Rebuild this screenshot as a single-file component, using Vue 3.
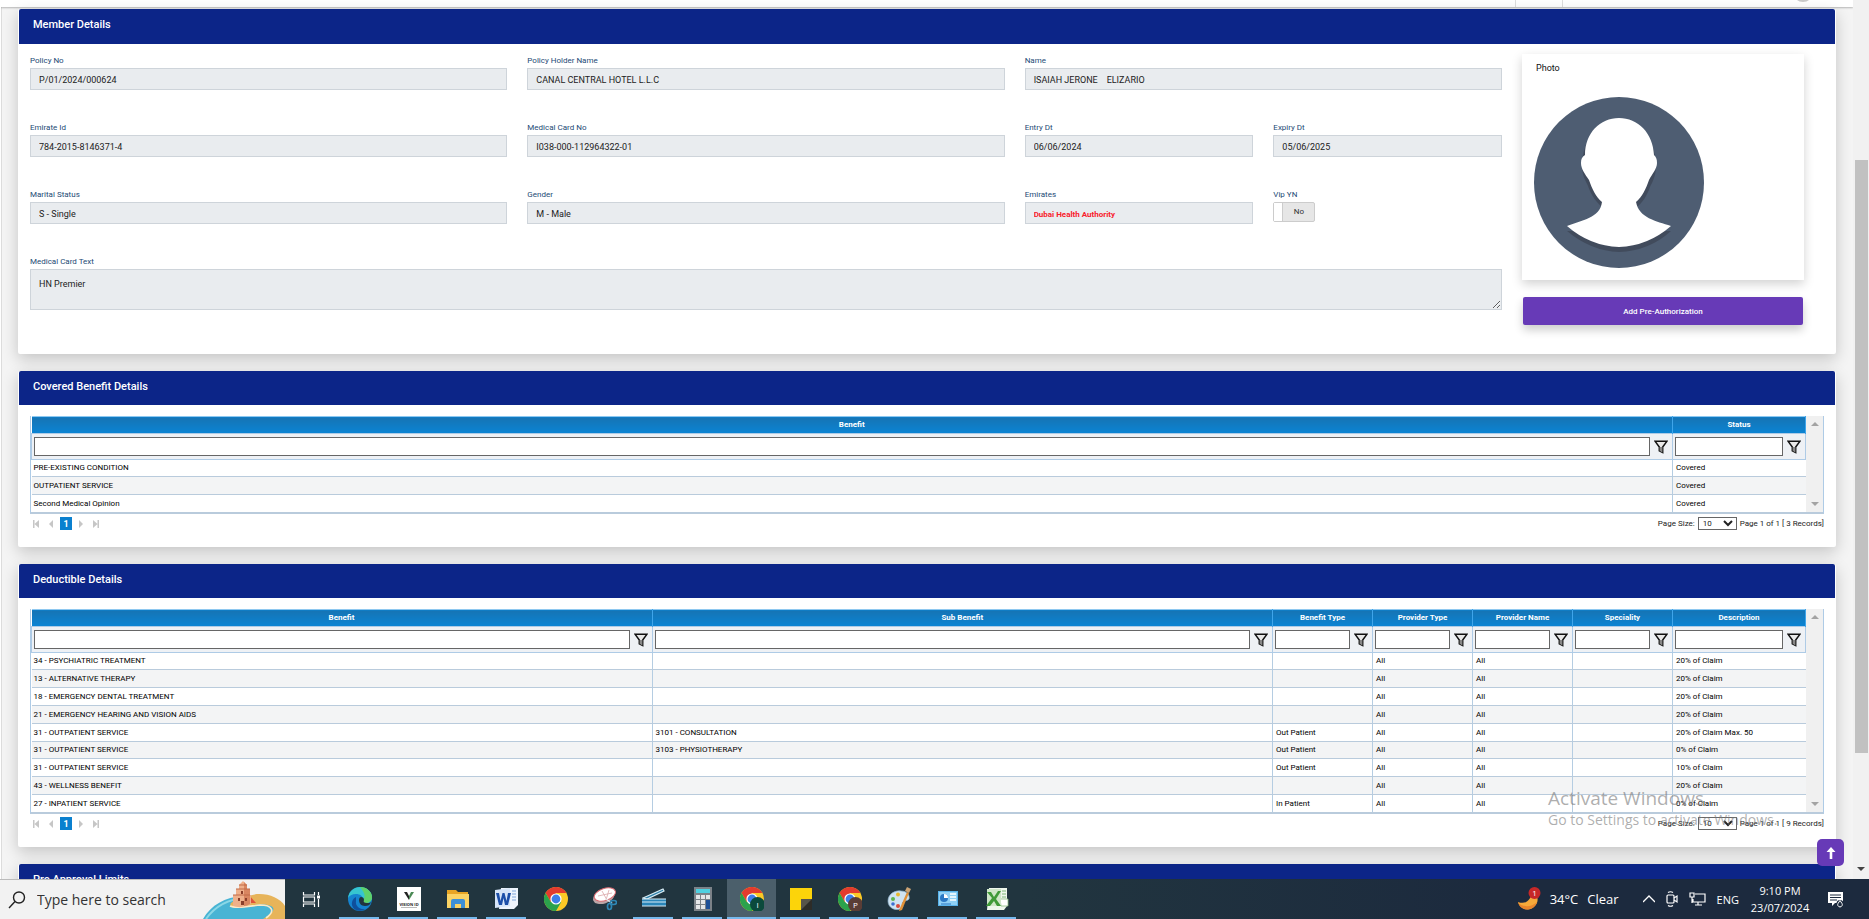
<script setup>
import { ref } from 'vue'

const fields = [
  { id: 'policy-no', label: 'Policy No', value: 'P/01/2024/000624', size: 'wide' },
  { id: 'policy-holder', label: 'Policy Holder Name', value: 'CANAL CENTRAL HOTEL L.L.C', size: 'wide' },
  { id: 'name', label: 'Name', value: 'ISAIAH JERONE    ELIZARIO', size: 'wide' },
  { id: 'emirate-id', label: 'Emirate Id', value: '784-2015-8146371-4', size: 'wide' },
  { id: 'card-no', label: 'Medical Card No', value: 'I038-000-112964322-01', size: 'wide' },
  { id: 'entry-dt', label: 'Entry Dt', value: '06/06/2024', size: 'half' },
  { id: 'expiry-dt', label: 'Expiry Dt', value: '05/06/2025', size: 'half' },
  { id: 'marital', label: 'Marital Status', value: 'S - Single', size: 'wide' },
  { id: 'gender', label: 'Gender', value: 'M - Male', size: 'wide' },
  { id: 'emirates', label: 'Emirates', value: 'Dubai Health Authority', size: 'half', alert: true },
]

const tables = [
  {
    id: 'covered',
    title: 'Covered Benefit Details',
    columns: [{ name: 'Benefit' }, { name: 'Status', width: 133 }],
    rows: [
      ['PRE-EXISTING CONDITION', 'Covered'],
      ['OUTPATIENT SERVICE', 'Covered'],
      ['Second Medical Opinion', 'Covered'],
    ],
    summary: 'Page 1 of 1 [ 3 Records]',
  },
  {
    id: 'deductible',
    title: 'Deductible Details',
    columns: [
      { name: 'Benefit' },
      { name: 'Sub Benefit' },
      { name: 'Benefit Type', width: 100 },
      { name: 'Provider Type', width: 100 },
      { name: 'Provider Name', width: 100 },
      { name: 'Speciality', width: 100 },
      { name: 'Description', width: 133 },
    ],
    rows: [
      ['34 - PSYCHIATRIC TREATMENT', '', '', 'All', 'All', '', '20% of Claim'],
      ['13 - ALTERNATIVE THERAPY', '', '', 'All', 'All', '', '20% of Claim'],
      ['18 - EMERGENCY DENTAL TREATMENT', '', '', 'All', 'All', '', '20% of Claim'],
      ['21 - EMERGENCY HEARING AND VISION AIDS', '', '', 'All', 'All', '', '20% of Claim'],
      ['31 - OUTPATIENT SERVICE', '3101 - CONSULTATION', 'Out Patient', 'All', 'All', '', '20% of Claim Max. 50'],
      ['31 - OUTPATIENT SERVICE', '3103 - PHYSIOTHERAPY', 'Out Patient', 'All', 'All', '', '0% of Claim'],
      ['31 - OUTPATIENT SERVICE', '', 'Out Patient', 'All', 'All', '', '10% of Claim'],
      ['43 - WELLNESS BENEFIT', '', '', 'All', 'All', '', '20% of Claim'],
      ['27 - INPATIENT SERVICE', '', 'In Patient', 'All', 'All', '', '0% of Claim'],
    ],
    summary: 'Page 1 of 1 [ 9 Records]',
  },
]

const vip = ref(false)
const cardText = ref('HN Premier')

const apps = [
  { id: 'taskview', label: 'Task View' },
  { id: 'edge', label: 'Edge', open: true },
  { id: 'vision', label: 'Vision', open: true },
  { id: 'folder', label: 'File Explorer', open: true },
  { id: 'word', label: 'Word', open: true },
  { id: 'chrome', label: 'Chrome' },
  { id: 'snip', label: 'Snipping Tool' },
  { id: 'scanner', label: 'Scanner', open: true },
  { id: 'calc', label: 'Calculator', open: true },
  { id: 'chrome', label: 'Chrome profile I', badge: 'I', badgeColor: '#0b4a3c', open: true, active: true },
  { id: 'notes', label: 'Sticky Notes', open: true },
  { id: 'chrome', label: 'Chrome profile P', badge: 'P', badgeColor: '#5a3d36', open: true },
  { id: 'paint', label: 'Paint', open: true },
  { id: 'panel', label: 'Control Panel', open: true },
  { id: 'excel', label: 'Excel', open: true },
]
</script>

<template>
  <div class="screen">
    <div class="viewport">
      <main class="page">
        <div class="navbar">
          <svg class="nav-avatar" viewBox="0 0 12 2" aria-hidden="true"><path d="M0 0h12q-2 2-6 2T0 0z" fill="#c9c9c9" /></svg>
        </div>

        <section class="panel member">
          <h2 class="panel-title">Member Details</h2>
          <div class="member-body">
            <div class="form">
              <div v-for="f in fields" :key="f.id" class="field" :class="f.size">
                <label :for="f.id">{{ f.label }}</label>
                <input :id="f.id" type="text" readonly :value="f.value" :class="{ alert: f.alert }" />
              </div>
              <div class="field half">
                <label for="vip">Vip YN</label>
                <button id="vip" type="button" class="toggle" @click="vip = !vip"><span class="knob"></span><span class="state">{{ vip ? 'Yes' : 'No' }}</span></button>
              </div>
              <div class="field full">
                <label for="card-text">Medical Card Text</label>
                <textarea id="card-text" v-model="cardText" readonly></textarea>
              </div>
            </div>
            <aside class="side">
              <div class="photo">
                <span class="photo-label">Photo</span>
                <svg viewBox="0 0 170 171" width="170" height="171" role="img" aria-label="Member photo">
                  <ellipse cx="85" cy="85.500" rx="85" ry="85.500" fill="#4e5d72" />
                  <g fill="#414b5c" transform="translate(0 5)">
                    <path d="M48 64C49 35 64 21 85 21s36 14 37 43c0 10-4 17-6 21-3 9-8 16-13 20H68c-5-4-11-12-14-21-2-5-6-10-6-20z" />
                    <path d="M33 129q24 20 52 21 30-1 52-21z" />
                  </g>
                  <path d="M33 129c15-6 33-8 35-24-6-5-10-13-13-22-4-6-8-11-8-17 0-4 1-6 4-8C51 36 66 21 85 21s34 15 35 37c2 2 3 4 3 8 0 6-5 11-8 17-3 9-7 17-13 22 3 16 20 19 35 24q-23 20-52 21-29-1-52-21z" fill="#fff" />
                </svg>
              </div>
              <button type="button" class="primary">Add Pre-Authorization</button>
            </aside>
          </div>
        </section>

        <section v-for="t in tables" :key="t.id" class="panel">
          <h2 class="panel-title">{{ t.title }}</h2>
          <div class="panel-body">
            <div class="grid-wrap">
              <table>
                <colgroup>
                  <col v-for="c in t.columns" :key="c.name" :style="c.width ? { width: c.width + 'px' } : {}" />
                </colgroup>
                <thead>
                  <tr class="heads">
                    <th v-for="c in t.columns" :key="c.name" scope="col">{{ c.name }}</th>
                  </tr>
                  <tr class="filters">
                    <td v-for="c in t.columns" :key="c.name">
                      <div class="filter">
                        <input type="text" :aria-label="'Filter ' + c.name" />
                        <button type="button" :aria-label="'Apply filter ' + c.name">
                          <svg viewBox="0 0 14 14" width="14" height="14"><path d="M1 1.200h12L8.700 7v5.600L5.300 10.800V7z" fill="#e9e9e9" stroke="#111" stroke-width="1.500" /><path d="M5.600 7v3.800l2.800 1.600V7z" fill="#888" /></svg>
                        </button>
                      </div>
                    </td>
                  </tr>
                </thead>
                <tbody>
                  <tr v-for="(r, i) in t.rows" :key="i">
                    <td v-for="(cell, j) in r" :key="j">{{ cell }}</td>
                  </tr>
                </tbody>
              </table>
              <div class="strip" aria-hidden="true"><i class="up"></i><i class="down"></i></div>
            </div>
            <div class="pager">
              <div class="pages">
                <button type="button" aria-label="First page"><svg viewBox="0 0 8 8" width="8" height="8"><path d="M1 0h1.500v8H1zM7 0v8L2.500 4z" /></svg></button>
                <button type="button" aria-label="Previous page"><svg viewBox="0 0 8 8" width="8" height="8"><path d="M6 0v8L2 4z" /></svg></button>
                <button type="button" class="current">1</button>
                <button type="button" aria-label="Next page"><svg viewBox="0 0 8 8" width="8" height="8"><path d="M2 0v8l4-4z" /></svg></button>
                <button type="button" aria-label="Last page"><svg viewBox="0 0 8 8" width="8" height="8"><path d="M5.500 0H7v8H5.500zM1 0v8l4.500-4z" /></svg></button>
              </div>
              <div class="size">
                <label :for="t.id + '-size'">Page Size:</label>
                <select :id="t.id + '-size'"><option>10</option><option>20</option></select>
                <span>{{ t.summary }}</span>
              </div>
            </div>
          </div>
        </section>

        <section class="panel">
          <h2 class="panel-title">Pre Approval Limits</h2>
          <div class="panel-body"></div>
        </section>
      </main>

      <div class="scrollbar" aria-hidden="true"><div class="thumb"></div><i class="down dark"></i></div>

      <div class="watermark"><p class="big">Activate Windows</p><p>Go to Settings to activate Windows.</p></div>
      <button type="button" class="to-top" aria-label="Back to top">
        <svg viewBox="0 0 12 12" width="12" height="12"><path d="M6 0l4.500 5H7.300v7H4.700V5H1.500z" fill="#fff" /></svg>
      </button>
    </div>

    <footer class="taskbar">
      <label class="search">
        <svg viewBox="0 0 18 18" width="18" height="18" aria-hidden="true"><circle cx="11" cy="6.500" r="5.500" fill="none" stroke="#222" stroke-width="1.400" /><path d="M7 10.500L1 17" stroke="#222" stroke-width="1.400" /></svg>
        <input type="text" placeholder="Type here to search" aria-label="Type here to search" />
        <svg class="castle" viewBox="0 0 82 38" width="82" height="38" aria-hidden="true">
          <path d="M0 38C8 24 22 16 40 15c22-2 38 6 42 16v7z" fill="#48b4d4" />
          <path d="M3 38C13 24 26 18 42 17" fill="none" stroke="#8ad7e6" stroke-width="2" />
          <path d="M46 15c12-5 30 0 36 10v13H60c8-5 14-10 8-13-8-3-18-1-27 1-8 2-16 0-13-4 4-4 12-5 18-7z" fill="#e7b45a" />
          <path d="M27 25c6 3 20 0 30-1 12 0 16 6 6 13" fill="none" stroke="#fbe9c8" stroke-width="1.600" />
          <path d="M46 14l7 8H44z" fill="#e0533a" />
          <path d="M30 25V14h3V8h3V4l4-4 4 4v4h3v6h1v9q-9 5-18 2z" fill="#efb08a" />
          <path d="M41 1l3 3v4h3v15q-3 2-6 2z" fill="#d98660" />
          <path d="M36 4h8M33 8h14M30 14h17" stroke="#c06a48" stroke-width="1" />
          <path d="M38 10h2v3h-2zM35 17h2v3h-2zM42 17h2v3h-2zM38 20h3v4h-3z" fill="#8a3f2a" />
        </svg>
      </label>

      <nav class="apps">
        <button v-for="(a, i) in apps" :key="i" type="button" :aria-label="a.label" :class="{ active: a.active, open: a.open }">
          <svg v-if="a.id === 'taskview'" viewBox="0 0 24 24" width="24" height="24" fill="none" stroke="#fff" stroke-width="1.200"><path d="M4.500 5v3h11V5M4.500 20v-3h11v3M4.500 10h11v5h-11zM19.500 5v3M19.500 12v8" /><path d="M18 8.500h3v3h-3z" fill="#fff" stroke="none" /></svg>
          <svg v-else-if="a.id === 'edge'" viewBox="0 0 24 24" width="24" height="24"><circle cx="12" cy="12" r="12" fill="#1583cf" /><path d="M0 11C1 4 6 0 12 0c7 0 12 5 12 10 0 4-3 6-6 6-3 0-4-1-3-3 0-4-3-6-7-6S1 9 0 11z" fill="#36c5d0" /><path d="M12 0c7 0 12 5 12 10 0 4-3 6-6 6-3 0-4-1-3-3 4-4 0-9-3-13z" fill="#5fd26a" /><path d="M11 13c0-2 1-3 2-3 2 0 3 1 3 3-1 2 0 3 3 3 2 0 3 0 4-1-1 3-3 4-6 4-4 0-6-3-6-6z" fill="#21353f" /><path d="M8 14c-1 5 4 9 9 8-2 2-6 2-9 1C3 21 2 13 8 10z" fill="#0f4f9c" /></svg>
          <svg v-else-if="a.id === 'vision'" viewBox="0 0 24 24" width="24" height="24"><path d="M0 0h24v24H0z" fill="#fff" /><path d="M7 5l5 8V9l-2-4z" fill="#222" /><path d="M17 5l-5 8V9l2-4z" fill="#4b8a55" /><text x="12" y="18.500" text-anchor="middle" class="logo-text">VISION ID</text><path d="M4 20.500h16" stroke="#bbb" /></svg>
          <svg v-else-if="a.id === 'folder'" viewBox="0 0 24 24" width="24" height="24"><path d="M1 3h9l2 2h10v5H1z" fill="#e8a524" /><path d="M1 7h22v14H1z" fill="#fbd364" /><path d="M5 21v-7q0-2 2-2h10q2 0 2 2v7h-4v-4H9v4z" fill="#3c8fd6" /></svg>
          <svg v-else-if="a.id === 'word'" viewBox="0 0 24 24" width="24" height="24"><path d="M6 1h17v17l-4 4H4z" fill="#eef4fc" /><path d="M17 4h4M17 7h4M17 10h4M17 13h4" stroke="#7fa5d8" /><path d="M0 3l15-2v18L0 21z" fill="#d7e5f8" /><path d="M1 6h3l1.500 8L7.500 6h2l2 8L13 6h3l-3 12h-3L8.500 11 7 18H4z" fill="#1d4fa8" /></svg>
          <svg v-else-if="a.id === 'chrome'" viewBox="0 0 24 24" width="24" height="24"><circle cx="12" cy="12" r="12" fill="#fbc926" /><path d="M1.600 6A12 12 0 0 1 22.400 6H12L6.800 15z" fill="#e33b2e" /><path d="M1.600 6A12 12 0 0 0 12 24l5.200-9H6.800z" fill="#2ba24c" /><circle cx="12" cy="12" r="5.600" fill="#fff" /><circle cx="12" cy="12" r="4.400" fill="#3f7ee8" /><template v-if="a.badge"><circle cx="17.500" cy="17.500" r="7.500" :fill="a.badgeColor" /><text x="17.500" y="20.500" text-anchor="middle" class="badge">{{ a.badge }}</text></template></svg>
          <svg v-else-if="a.id === 'snip'" viewBox="0 0 24 24" width="24" height="24"><ellipse cx="11" cy="10" rx="11" ry="6.500" fill="#bba5a7" transform="rotate(-18 11 11)" /><ellipse cx="12" cy="7.500" rx="11" ry="6" fill="#fff" stroke="#d96b72" transform="rotate(-18 12 8)" /><path d="M5 9l14-3M9 4l5 9M16 3l-3 10" stroke="#d9a6a8" stroke-width=".8" /><path d="M13 12l6 4" stroke="#dfe6ea" stroke-width="1.500" /><g fill="none" stroke="#2e86b5" stroke-width="1.700"><ellipse cx="20.500" cy="15.500" rx="3" ry="2" /><ellipse cx="16.500" cy="19.500" rx="2" ry="3" /></g></svg>
          <svg v-else-if="a.id === 'scanner'" viewBox="0 0 24 24" width="24" height="24"><path d="M1 11L21 2l1 2L5 12z" fill="#2d7fa8" stroke="#d8ecf5" stroke-width="1.200" /><path d="M0 12h24v7H0z" fill="#2a86b8" /><path d="M0 12h24M0 15h24M0 19h24" stroke="#d8ecf5" stroke-width="1.200" /></svg>
          <svg v-else-if="a.id === 'calc'" viewBox="0 0 24 24" width="24" height="24"><path d="M3 0h18v24H3z" fill="#7b8288" /><path d="M5 2h14v4H5z" fill="#4fd0e0" /><path d="M5 8h4v4H5zM10 8h4v4h-4zM15 8h4v4h-4zM5 13h4v4H5zM10 13h4v4h-4zM5 18h4v4H5zM10 18h4v4h-4z" fill="#e4e6e8" /><path d="M15 13h4v9h-4z" fill="#1d4f96" /></svg>
          <svg v-else-if="a.id === 'notes'" viewBox="0 0 24 24" width="24" height="24"><path d="M1 1h22v22H1z" fill="#fcd40a" /><path d="M12 12h11v11H12z" fill="#2d2c28" /><path d="M12 12h11L12 23z" fill="#57544a" /></svg>
          <svg v-else-if="a.id === 'paint'" viewBox="0 0 24 24" width="24" height="24"><path d="M1 14C1 7 8 3 14 4c6 0 9 4 8 8-1 2-4 1-6 3s1 4-1 6C9 25 1 21 1 14z" fill="#cfe3f2" stroke="#8fb4cf" stroke-width=".7" /><circle cx="6" cy="12" r="2" fill="#5db54c" /><circle cx="11" cy="7.500" r="2" fill="#e8b92e" /><circle cx="6" cy="17" r="1.800" fill="#3d6fd0" /><circle cx="11" cy="19" r="2" fill="#d84a3c" /><path d="M20 5l2 1-7 17-3 1 1-3z" fill="#e09138" /><path d="M18 4l2-4 4 2-2 4z" fill="#caa274" /></svg>
          <svg v-else-if="a.id === 'panel'" viewBox="0 0 24 24" width="24" height="24"><path d="M2 4h20v15H2z" fill="#57b2ea" /><path d="M3 5h18v13H3z" fill="#8fd0f5" /><circle cx="8" cy="11" r="4" fill="#2b78c4" /><path d="M8 11V7a4 4 0 0 1 4 4z" fill="#fff" /><path d="M14 7h6M14 10h6M14 13h6" stroke="#fff" stroke-width="1.500" /><path d="M5 17h10" stroke="#2b78c4" /></svg>
          <svg v-else viewBox="0 0 24 24" width="24" height="24"><path d="M4 1h18v18l-3 4H2z" fill="#eef7ec" /><path d="M15 12h8v7h-7z" fill="#fff" stroke="#8dbb83" stroke-width=".8" /><path d="M2 2h14v17H2z" fill="#cfe6c8" /><path d="M2 5h4l3 5 4-6h3l-5 8 5 7h-4l-3-5-4 5H1l6-8z" fill="#3f9a38" /><path d="M17 4h4M17 7h4M17 10h4" stroke="#7fb878" /></svg>
        </button>
      </nav>

      <div class="tray">
        <div class="weather">
          <svg viewBox="0 0 24 24" width="24" height="24" aria-hidden="true"><path d="M15 2c6 5 8 13 2 18S3 22 1 15c8 3 14-2 14-13z" fill="#f5a93a" /><path d="M1 15c3 5 13 6 19 0-3 10-17 10-19 0z" fill="#e8862c" /><circle cx="17.500" cy="6" r="6" fill="#c62828" /><text x="17.500" y="9" text-anchor="middle" class="badge">1</text></svg>
          <span>34°C</span><span>Clear</span>
        </div>
        <svg viewBox="0 0 12 12" width="12" height="12" fill="none" stroke="#fff" stroke-width="1.300" aria-hidden="true"><path d="M0 9l6-6 6 6" /></svg>
        <svg viewBox="0 0 12 16" width="12" height="16" fill="none" stroke="#fff" stroke-width="1.200" aria-hidden="true"><rect x="1" y="4" width="7" height="8" rx="1" /><path d="M8 7l3-2v6L8 9M2 1.500q2.500-1.500 5 0M2 14.500q2.500 1.500 5 0" /></svg>
        <svg viewBox="0 0 17 16" width="17" height="16" fill="none" stroke="#fff" stroke-width="1.200" aria-hidden="true"><path d="M6 3h10v8H4V8M9 11v3M6 14h7M1 2h4v4H1zM3 6v6" /></svg>
        <span class="lang">ENG</span>
        <div class="clock"><span>9:10 PM</span><span>23/07/2024</span></div>
        <svg viewBox="0 0 17 17" width="17" height="17" aria-hidden="true"><path d="M1 1h15v11H8l-3 3v-3H1z" fill="#fff" /><path d="M3 4h11M3 6.500h11M3 9h7" stroke="#1c2a3e" /><circle cx="13" cy="12.500" r="3.500" fill="#1c2a3e" /><path d="M11 12.500a2.300 2.300 0 1 0 4 0L13 9.500z" fill="none" stroke="#fff" /></svg>
      </div>
    </footer>
  </div>
</template>

<style>
html, body { margin: 0; overflow: hidden; }
</style>

<style scoped>
* { box-sizing: border-box; }
.screen {
  height: 100vh;
  display: flex;
  flex-direction: column;
  font-family: Roboto, "Liberation Sans", sans-serif;
  font-size: 8px;
  color: #111;
}
button, input, select, textarea { font-family: inherit; margin: 0; border-radius: 0; }
button { border: 0; padding: 0; background: none; color: inherit; }
p, h2 { margin: 0; }
.viewport { position: relative; flex: 1; min-height: 0; display: flex; overflow: hidden; }
.page { flex: 1; min-width: 0; overflow: hidden; background: #f4f4f4; border-left: 1px solid #fff; box-shadow: inset 1px 0 #dcdcdc; }
.navbar {
  height: 7px;
  margin-bottom: 2px;
  background: linear-gradient(90deg, transparent 1514px, #ddd 1514px, #ddd 1515px, transparent 1515px, transparent 1561px, #ddd 1561px, #ddd 1562px, transparent 1562px) #fff;
  box-shadow: 0 1px 2px rgba(0, 0, 0, .25);
  display: flex;
  justify-content: flex-end;
  align-items: flex-start;
  padding-right: 44px;
}
.nav-avatar { width: 12px; height: 2px; }

.panel { margin: 0 17px 17px; background: #fff; box-shadow: 0 5px 16px rgba(0, 0, 0, .2); border-radius: 2px; }
.panel-title {
  margin: 0 1px;
  height: 34px;
  padding: 9px 14px;
  background: #0c2588;
  border-radius: 2px 2px 0 0;
  color: #fff;
  font-size: 11px;
  line-height: 14px;
  font-weight: 500;
}
.member .panel-title { height: 35px; }
.panel-body { padding: 11px 12px 17px; }

.member-body { display: flex; gap: 20px; padding: 10px 32px 29px 12px; }
.form { flex: 1; display: grid; grid-template-columns: repeat(12, 1fr); column-gap: 20px; row-gap: 32px; align-content: start; padding-top: 1px; }
.field { display: flex; flex-direction: column; align-items: stretch; }
.wide { grid-column: span 4; }
.half { grid-column: span 2; }
.full { grid-column: 1 / -1; }
.field label { color: #1c4a75; font-size: 8px; line-height: 12px; margin-bottom: 1px; }
.field input, .field textarea {
  width: 100%;
  height: 22px;
  border: 1px solid #ced4da;
  background: #e9ecef;
  padding: 2px 8px 0;
  font-size: 9px;
  line-height: 18px;
  color: #222;
  outline: 0;
  white-space: pre;
}
.field .alert { color: #f8202c; font-size: 8px; font-weight: 700; }
.field textarea { height: 41px; padding: 5px 8px; display: block; }
.toggle { width: 42px; height: 20px; display: flex; border: 1px solid #ccc; border-radius: 2px; background: #e6e6e6; }
.knob { width: 9px; height: 18px; background: #fff; border-right: 1px solid #ccc; }
.state { flex: 1; font-size: 8px; line-height: 18px; color: #333; text-align: center; }

.side { width: 282px; }
.photo { height: 226px; padding: 7px 12px; background: #fff; box-shadow: 0 4px 10px rgba(0, 0, 0, .18); }
.photo-label { display: block; margin: 0 2px 22px; font-size: 9px; line-height: 14px; }
.photo svg { display: block; }
.primary {
  display: block;
  width: 280px;
  height: 28px;
  margin: 17px 1px 0;
  border-radius: 2px;
  background: #673ab7;
  color: #fff;
  font-size: 8px;
  font-weight: 500;
  box-shadow: 0 5px 10px rgba(0, 0, 0, .2);
}

.grid-wrap { display: flex; border: 1px solid #aecbe6; border-top: 0; border-bottom: 2px solid #b9cbdc; }
table { flex: 1; width: 100%; table-layout: fixed; border-collapse: collapse; color: #000; }
.heads th {
  height: 17px;
  padding: 0;
  background: linear-gradient(#1674b4, #0a84d4);
  border-right: 1px solid #3fa5ea;
  border-top: 1px solid #8ec8f0;
  color: #fff;
  font-size: 8px;
  line-height: 12px;
  font-weight: 700;
}
.filters td { height: 26px; padding: 0 4px 0 2px; background: #eef1f5; border: 1px solid #aecbe6; }
.filter { display: flex; align-items: center; gap: 4px; }
.filter input { flex: 1; min-width: 0; height: 19px; border: 1px solid #666; background: #fff; padding: 0 2px; font-size: 9px; }
.filter button { width: 14px; height: 14px; }
.filter svg { display: block; }
tbody td { padding: 0 3px; font-size: 8px; line-height: 17px; border-left: 1px solid #b5cde2; border-bottom: 1px solid #b9cbdc; white-space: nowrap; }
tbody td:first-child { border-left: 0; padding-left: 2px; }
tbody tr:nth-child(5n + 1) td { line-height: 16px; }
tbody tr:last-child td { border-bottom: 0; }
tbody tr:nth-child(even) td { background: #f3f4f5; }
.strip { width: 17px; background: #f0f0f0; display: flex; flex-direction: column; align-items: center; justify-content: space-between; padding: 6px 0; }
.up, .down { display: block; width: 0; height: 0; border: 4px solid transparent; }
.up { border-top: 0; border-bottom-color: #a3a3a3; }
.down { border-bottom: 0; border-top-color: #a3a3a3; }
.pager { display: flex; justify-content: space-between; align-items: center; padding-top: 3px; height: 16px; }
.pages { display: flex; align-items: center; gap: 3px; }
.pages button { width: 12px; height: 13px; display: flex; align-items: center; justify-content: center; }
.pages svg { fill: #c6c6c6; }
.pages .current { width: 12px; background: #0a80cf; color: #fff; font-size: 9px; font-weight: 700; }
.size { display: flex; align-items: center; gap: 3px; color: #222; line-height: 12px; }
.size select { width: 39px; height: 13px; padding: 0; border: 1px solid #666; background: #fff; font-size: 8px; color: #222; }

.scrollbar { width: 16px; background: #f1f1f1; display: flex; flex-direction: column; align-items: center; justify-content: space-between; padding: 160px 0 8px; }
.thumb { width: 13px; height: 593px; background: #c1c1c1; }
.dark { border-top-color: #444; }
.watermark { position: absolute; right: 87px; bottom: 50px; width: 234px; color: rgba(120, 120, 120, .6); font-family: "Open Sans", sans-serif; font-size: 14px; line-height: 18px; white-space: nowrap; pointer-events: none; }
.big { font-size: 19px; line-height: 26px; }
.to-top { position: absolute; right: 25px; bottom: 13px; width: 27px; height: 27px; border-radius: 5px; background: #673ab7; display: flex; align-items: center; justify-content: center; }

.taskbar { height: 40px; display: flex; color: #fff; background: linear-gradient(90deg, #21353f 0%, #21353f 55%, #1c2a3e 80%, #1c2a3e 100%); font-family: "Open Sans", sans-serif; font-size: 13px; }
.search { width: 285px; display: flex; align-items: center; padding-left: 8px; background: #f2f2f2; border-top: 1px solid #bbb; }
.search input { flex: 1; min-width: 0; height: 30px; margin-left: 11px; padding: 0; border: 0; outline: 0; background: none; font-size: 14px; }
.search input::placeholder { color: #333; opacity: 1; }
.castle { flex: none; align-self: flex-end; }
.apps { display: flex; padding-left: 1px; }
.apps button { width: 49px; display: flex; align-items: center; justify-content: center; position: relative; }
.apps .open::after { content: ""; position: absolute; left: 4px; right: 5px; bottom: 0; height: 2px; background: #76b9ed; }
.apps .active { background: #4b5f6b; }
.apps .active::after { left: 0; right: 0; }
.badge { font-size: 8px; fill: #fff; }
.logo-text { font-size: 4px; font-weight: 700; fill: #222; }
.tray { margin-left: auto; display: flex; align-items: center; gap: 11px; padding-right: 25px; }
.weather { display: flex; align-items: center; gap: 9px; margin-right: 13px; }
.tray .lang { font-size: 11px; }
.clock { width: 60px; margin-right: 6px; display: flex; flex-direction: column; text-align: center; font-size: 11px; line-height: 17px; }
</style>
